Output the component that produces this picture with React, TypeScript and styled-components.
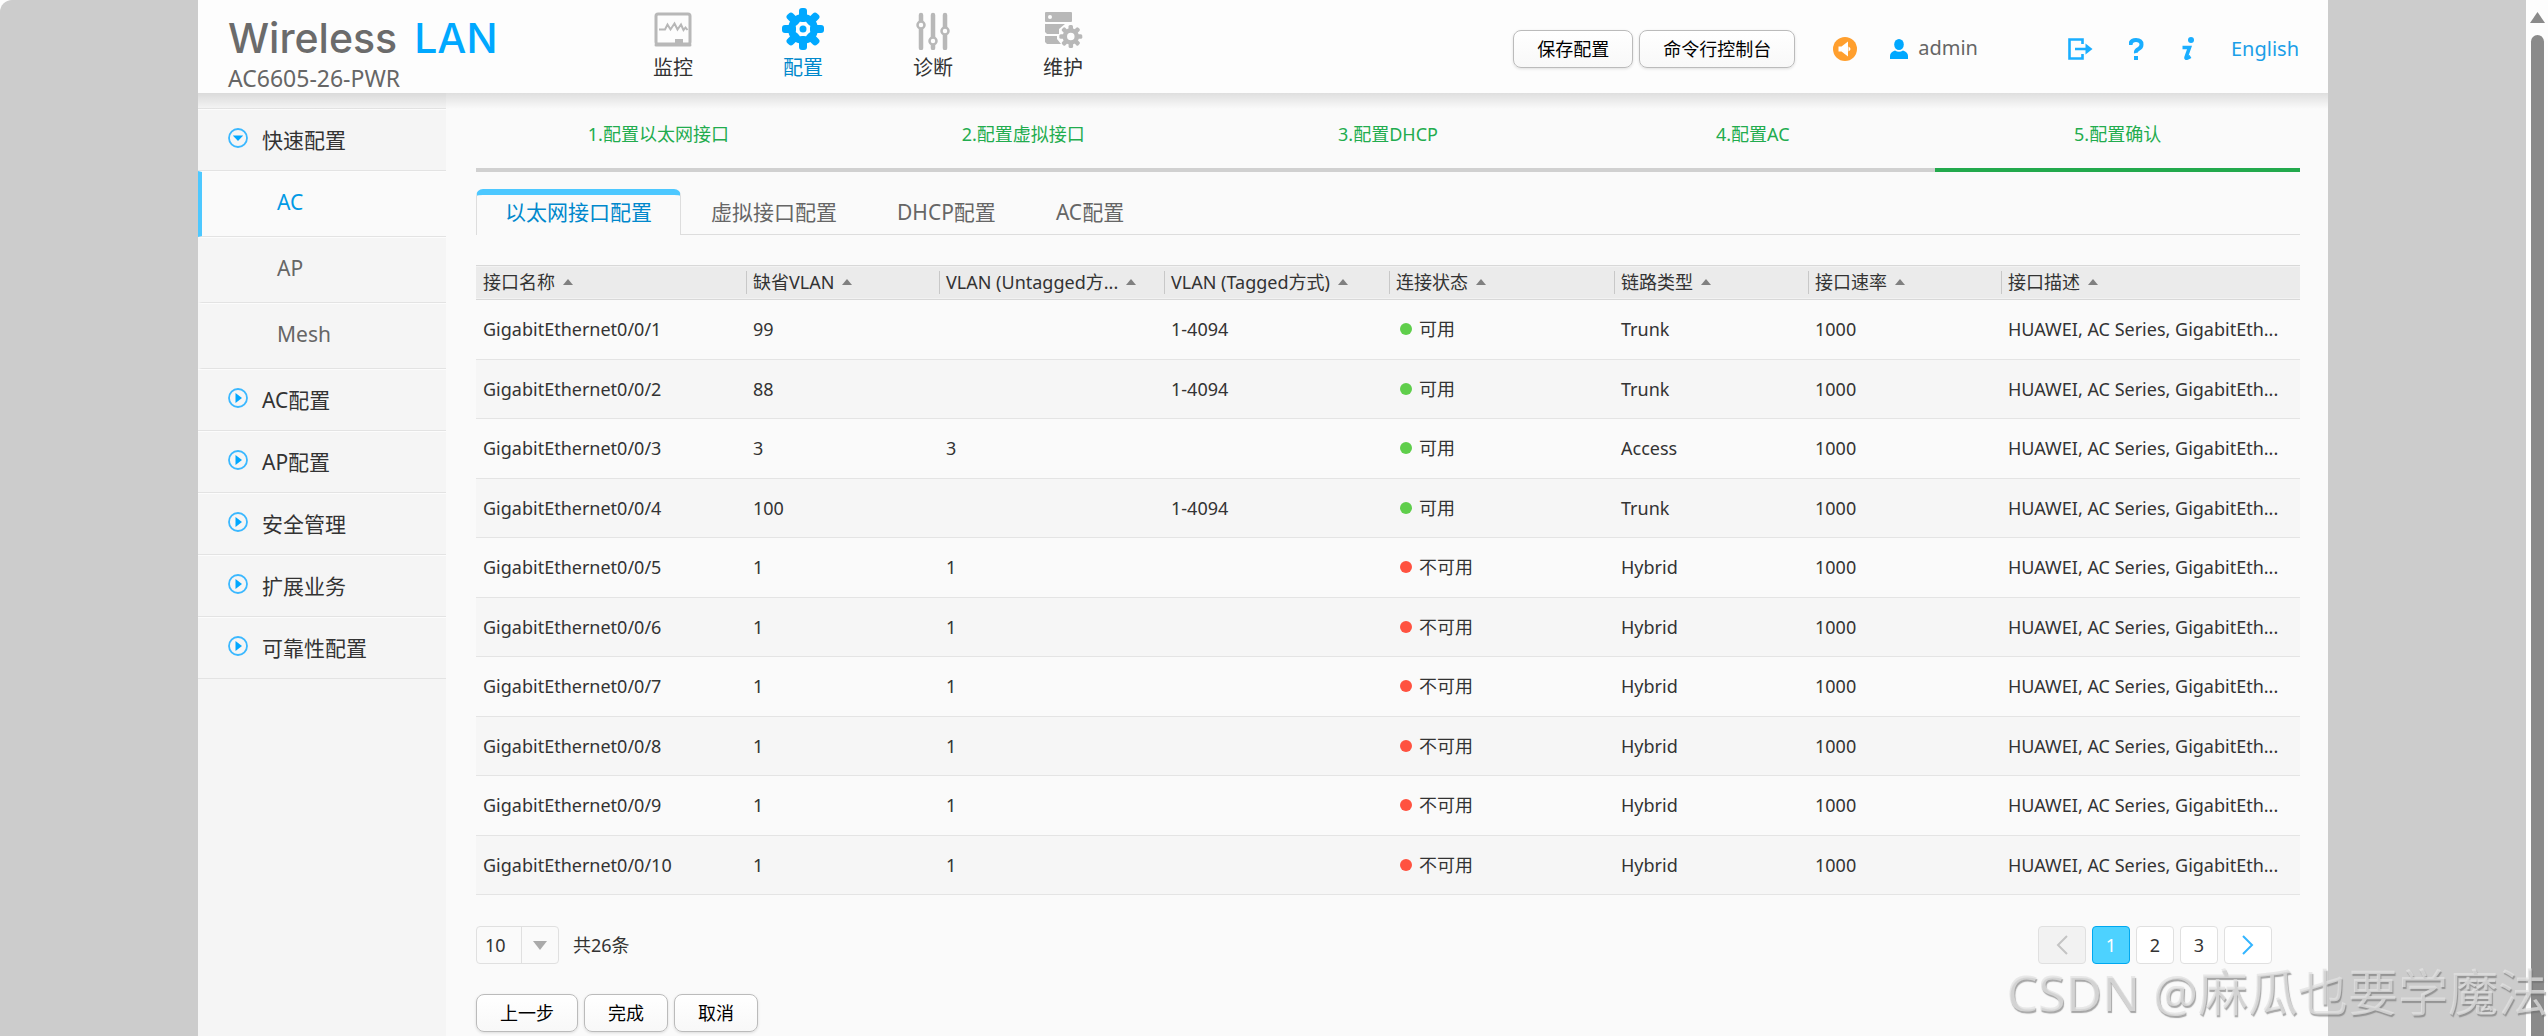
import React, { useState } from "react";
import styled, { createGlobalStyle, css } from "styled-components";

const Global = createGlobalStyle`
  *, *::before, *::after { box-sizing: border-box; }
  html { background: #fdfdfd; }
  body {
    margin: 0;
    color: #333;
    font-family: "Noto Sans", "Noto Sans CJK SC", sans-serif;
    font-size: 18px;
    line-height: 24px;
    overflow: hidden;
  }
  button, select { font-family: inherit; font-size: 18px; line-height: 24px; }
  a { color: inherit; text-decoration: none; }
`;

const Shell = styled.div`
  display: flex;
  height: 100vh;
  overflow: hidden;
  background: #fdfdfd;
`;

const Backdrop = styled.div`
  flex: 1;
  min-width: 0;
  background: #ccc;
  border-top-left-radius: 12px;
  overflow: hidden;
`;

const Page = styled.div`
  display: flex;
  flex-direction: column;
  max-width: 2130px;
  min-height: 100%;
  margin: 0 auto;
  background: #fafafa;
`;

const ScrollTrack = styled.div`
  display: flex;
  flex-direction: column;
  align-items: center;
  flex: 0 0 22px;
  padding-top: 12px;
  border-top-right-radius: 12px;
`;

const ScrollThumb = styled.div`
  flex: 1;
  width: 13px;
  margin-top: 12px;
  border-radius: 7px 7px 0 0;
  background: #8a8a8a;
`;

/* ---------- header ---------- */

const Header = styled.header`
  position: relative;
  display: flex;
  height: 93px;
  padding: 0 29px 0 30px;
  background: #fdfdfd;
  &::after {
    content: "";
    position: absolute;
    left: 0;
    right: 0;
    top: 100%;
    height: 16px;
    background: linear-gradient(rgba(0, 0, 0, 0.11), rgba(0, 0, 0, 0));
    pointer-events: none;
  }
`;

const Brand = styled.div`
  width: 380px;
  padding-top: 14px;
  color: #666;
`;

const Logo = styled.div`
  display: flex;
  gap: 17px;
  font: 500 41px/48px Inter, "Open Sans", sans-serif;
  color: #6b6b6b;
`;

const LogoAccent = styled.span`
  color: #00a8ff;
`;

const Model = styled.div`
  font-size: 23px;
  line-height: 32px;
`;

const Nav = styled.nav`
  display: flex;
`;

const NavLink = styled.a<{ $active?: boolean }>`
  display: flex;
  flex-direction: column;
  align-items: center;
  gap: 4px;
  width: 130px;
  padding-top: 8px;
  font-size: 20px;
  line-height: 28px;
  color: ${(p) => (p.$active ? "#0088cc" : "#333")};
  svg { display: block; }
`;

const Tools = styled.div`
  display: flex;
  align-items: center;
  margin-left: auto;
  height: 98px;
`;

const ButtonRow = styled.div`
  display: flex;
  gap: 6px;
`;

const Button = styled.button`
  height: 38px;
  padding: 0 23px;
  border: 1px solid #bbb;
  border-radius: 8px;
  background: linear-gradient(#fff, #f8f8f8);
  box-shadow: 0 1px 3px rgba(0, 0, 0, 0.12);
  color: #000;
  white-space: nowrap;
`;

const IconButton = styled.button`
  display: flex;
  padding: 0;
  border: 0;
  background: none;
`;

const User = styled.div`
  display: flex;
  align-items: center;
  gap: 10px;
  margin: 0 90px 0 33px;
  font-size: 20px;
  color: #666;
`;

const UserName = styled.span`
  padding-bottom: 3px;
`;

const Notice = styled(IconButton)`
  margin-left: 38px;
`;

const Shortcuts = styled.div`
  display: flex;
  align-items: center;
  gap: 36px;
`;

const Language = styled.a`
  font-size: 20px;
  color: #1b9fe8;
`;

/* ---------- sidebar ---------- */

const Body = styled.div`
  display: flex;
  flex: 1;
`;

const Sidebar = styled.nav`
  flex: 0 0 248px;
  padding-top: 15px;
  background: #f5f5f5;
`;

const Menu = styled.ul`
  margin: 0;
  padding: 0;
  list-style: none;
  border-top: 1px solid #e3e3e3;
`;

const itemBase = css`
  display: flex;
  align-items: center;
  font-size: 21px;
  border-top: 1px solid #fcfcfc;
  border-bottom: 1px solid #e3e3e3;
`;

const Group = styled.a`
  ${itemBase}
  gap: 14px;
  height: 62px;
  padding-left: 30px;
  svg { display: block; margin-bottom: 4px; }
`;

const SubItem = styled.a<{ $active?: boolean }>`
  ${itemBase}
  height: 66px;
  padding-bottom: 5px;
  padding-left: 75px;
  border-left: 4px solid ${(p) => (p.$active ? "#4dc8ff" : "transparent")};
  background: ${(p) => (p.$active ? "#fafafa" : "transparent")};
  color: ${(p) => (p.$active ? "#0099e5" : "#666")};
`;

/* ---------- content ---------- */

const Main = styled.main`
  flex: 1;
  min-width: 0;
  padding: 21px 28px 0 30px;
`;

const Steps = styled.ol`
  display: grid;
  grid-template-columns: repeat(5, 1fr);
  margin: 0;
  padding: 0;
  list-style: none;
`;

const Step = styled.li<{ $current?: boolean }>`
  height: 58px;
  padding-top: 8px;
  border-bottom: 4px solid ${(p) => (p.$current ? "#22a94c" : "#d0d0d0")};
  text-align: center;
  color: #22ac4e;
`;

const Tabs = styled.div`
  display: flex;
  height: 46px;
  margin-top: 17px;
  box-shadow: inset 0 -1px #ddd;
`;

const Tab = styled.button<{ $active?: boolean }>`
  padding: 0 29px;
  border: 1px solid transparent;
  border-width: 0 1px;
  background: none;
  font-size: 21px;
  color: #666;
  ${(p) =>
    p.$active &&
    css`
      padding: 0 28px 6px;
      border-color: #ddd;
      border-top: 6px solid #4dc8ff;
      border-radius: 7px 7px 0 0;
      background: #fafafa;
      color: #0088cc;
    `}
`;

const Table = styled.table`
  width: 100%;
  margin-top: 30px;
  table-layout: fixed;
  border-collapse: separate;
  border-spacing: 0;
`;

const Th = styled.th`
  height: 35px;
  padding: 0;
  border-top: 1px solid #d8d8d8;
  border-bottom: 1px solid #d8d8d8;
  background: #ebebeb;
  font-weight: 400;
  text-align: left;
  box-shadow: inset 0 1px #f2f2f2, inset 0 -1px #f2f2f2;
`;

const Sort = styled.button`
  display: flex;
  align-items: center;
  gap: 8px;
  width: 100%;
  height: 23px;
  padding: 0 6px 2px;
  border: 0;
  border-left: 1px solid #c8c8c8;
  background: none;
  color: #333;
  white-space: nowrap;
  th:first-child & { border-left-color: transparent; }
  svg { flex: none; }
`;

const Row = styled.tr`
  height: 60px;
  &:nth-child(even) { height: 59px; background: #f6f6f6; }
`;

const Td = styled.td`
  padding: 0 7px 1px;
  border-bottom: 1px solid #e4e4e4;
  overflow: hidden;
  text-overflow: ellipsis;
  white-space: nowrap;
`;

const Status = styled.span<{ $up: boolean }>`
  display: flex;
  align-items: center;
  gap: 7px;
  padding-left: 4px;
  &::before {
    content: "";
    width: 12px;
    height: 12px;
    border-radius: 50%;
    background: ${(p) => (p.$up ? "#5fce4b" : "#ff5240")};
  }
`;

const Footer = styled.div`
  display: flex;
  align-items: center;
  margin: 31px 28px 30px 0;
`;

const Total = styled.label`
  display: flex;
  align-items: center;
  gap: 14px;
`;

const SizeBox = styled.span`
  display: flex;
  position: relative;
  width: 83px;
  height: 38px;
  border: 1px solid #e0e0e0;
  border-radius: 4px;
  svg { position: absolute; right: 11px; top: 14px; pointer-events: none; }
  &::after {
    content: "";
    position: absolute;
    right: 36px;
    top: 0;
    bottom: 0;
    border-left: 1px solid #e0e0e0;
  }
`;

const SizeSelect = styled.select`
  appearance: none;
  width: 100%;
  padding: 0 8px;
  border: 0;
  background: none;
  color: #333;
`;

const Pager = styled.nav`
  display: flex;
  gap: 6px;
  margin-left: auto;
`;

const PageButton = styled.button<{ $active?: boolean; $wide?: boolean }>`
  display: flex;
  align-items: center;
  justify-content: center;
  width: ${(p) => (p.$wide ? 48 : 38)}px;
  height: 38px;
  padding: 0;
  border: 1px solid ${(p) => (p.$active ? "#00a8f0" : "#e0e0e0")};
  border-radius: 4px;
  background: ${(p) => (p.$active ? "#4dd2ff" : "#fff")};
  color: ${(p) => (p.$active ? "#fff" : "#333")};
  &:disabled { background: #f2f2f2; }
`;

const Watermark = styled.div`
  position: fixed;
  right: 0;
  bottom: 8px;
  font: 400 50px/72px "Noto Sans", "Noto Sans CJK SC", sans-serif;
  color: rgba(225, 225, 225, 0.75);
  text-shadow: 1px 2px 1px rgba(110, 110, 110, 0.6);
  white-space: nowrap;
  pointer-events: none;
`;

/* ---------- icons ---------- */

const teeth = [0, 45, 90, 135, 180, 225, 270, 315];

const MonitorIcon = () => (
  <svg width="40" height="42" viewBox="0 0 40 42" fill="none" stroke="#b8b8b8">
    <rect x="3" y="6" width="34" height="30" rx="2" strokeWidth="3" />
    <path d="M3 37h34" strokeWidth="3" strokeLinecap="round" />
    <path d="M6 21.500h6l2.500-5 3 5 4-6 3 6 3.500-5 2.500 5.500 2-2.500 2 2.500" strokeWidth="2" />
    <path d="M22 35v-4h8v4z" fill="#b8b8b8" stroke="none" />
  </svg>
);

const GearIcon = () => (
  <svg width="42" height="42" viewBox="0 0 42 42" fill="#00a8ff">
    {teeth.map((a) => (
      <rect key={a} x="17" y="0" width="8" height="14" rx="3" transform={`rotate(${a} 21 21)`} />
    ))}
    <circle cx="21" cy="21" r="11.500" fill="none" stroke="#00a8ff" strokeWidth="7" />
    <circle cx="21" cy="21" r="3.500" />
  </svg>
);

const SlidersIcon = () => (
  <svg width="40" height="42" viewBox="0 0 40 42" fill="#fdfdfd" stroke="#b8b8b8">
    <path d="M8 7v33M20 7v33M32 7v33" strokeWidth="4.500" strokeLinecap="round" />
    <circle cx="8" cy="17" r="3.500" strokeWidth="2.500" />
    <circle cx="20" cy="33" r="3.500" strokeWidth="2.500" />
    <circle cx="32" cy="23" r="3.500" strokeWidth="2.500" />
  </svg>
);

const MaintainIcon = () => (
  <svg width="40" height="42" viewBox="0 0 40 42" fill="#b8b8b8">
    <rect x="2" y="4" width="27" height="10" rx="1" />
    <circle cx="7" cy="9" r="2" fill="#fdfdfd" />
    <path d="M2 16h20l-6 5v5H4l-2-2zM2 28h12v3l4 5H4l-2-2z" />
    {teeth.map((a) => (
      <rect key={a} x="25.500" y="17" width="4.500" height="8" rx="1.500" transform={`rotate(${a} 27.800 28.500)`} />
    ))}
    <circle cx="27.800" cy="28.500" r="6" fill="#fdfdfd" stroke="#b8b8b8" strokeWidth="4.500" />
  </svg>
);

const SpeakerIcon = () => (
  <svg width="24" height="24" viewBox="0 0 24 24">
    <circle cx="12" cy="12" r="12" fill="#ff9f2e" />
    <path d="M5.500 9.500h3l6.500-5v15l-6.500-5h-3z" fill="#fff" />
    <path d="M15.500 9.500q4 2.500 0 5z" fill="#fff" />
  </svg>
);

const UserIcon = () => (
  <svg width="18" height="20" viewBox="0 0 18 20" fill="#00a8ff">
    <ellipse cx="9" cy="5.500" rx="4.800" ry="5.500" />
    <path d="M0 20v-3q0-4 5-5.500 4 2.500 8 0 5 1.500 5 5.500v3z" />
  </svg>
);

const LogoutIcon = () => (
  <svg width="25" height="22" viewBox="0 0 25 22" fill="none" stroke="#1aaeff" strokeWidth="2.600">
    <path d="M14.500 6V1.500h-13v19h13V16M7 11h14" />
    <path d="M17.500 5.500 24.500 11l-7 5.500z" fill="#1aaeff" stroke="none" />
  </svg>
);

const HelpIcon = () => (
  <svg width="16" height="22" viewBox="2 0 16 22" fill="none" stroke="#1aaeff" strokeWidth="4">
    <path d="M3.500 7q0-5 5.500-5t5.500 4.500q0 3-3 4.500t-2.500 4" />
    <path d="M9 18v4" />
  </svg>
);

const InfoIcon = () => (
  <svg width="14" height="24" viewBox="0 0 14 24" fill="none" stroke="#1aaeff">
    <circle cx="10" cy="3" r="3" fill="#1aaeff" stroke="none" />
    <path d="M1.500 10.500h7L5 20.500q-.5 2 4.500-1" strokeWidth="3.600" />
  </svg>
);

const BulletIcon = ({ open }: { open?: boolean }) => (
  <svg width="20" height="20" viewBox="0 0 20 20">
    <circle cx="10" cy="10" r="9" fill="none" stroke="#3bb8ff" strokeWidth="1.800" />
    <path d={open ? "M4.800 7.500h10.400L10 13z" : "M7.500 5v10l6.500-5z"} fill="#00a8ff" />
  </svg>
);

const Triangle = ({ w, h, color, down }: { w: number; h: number; color: string; down?: boolean }) => (
  <svg width={w} height={h} viewBox="0 0 10 6" preserveAspectRatio="none">
    <path d={down ? "M0 0h10L5 6z" : "M0 6h10L5 0z"} fill={color} />
  </svg>
);

const Chevron = ({ color, right }: { color: string; right?: boolean }) => (
  <svg width="12" height="20" viewBox="0 0 12 20" fill="none" stroke={color} strokeWidth="2">
    <path d={right ? "M1 1l9 9-9 9" : "M11 1l-9 9 9 9"} />
  </svg>
);

/* ---------- data ---------- */

const navItems = [
  { label: "监控", icon: <MonitorIcon /> },
  { label: "配置", icon: <GearIcon />, active: true },
  { label: "诊断", icon: <SlidersIcon /> },
  { label: "维护", icon: <MaintainIcon /> },
];

const groups = ["AC配置", "AP配置", "安全管理", "扩展业务", "可靠性配置"];
const steps = ["1.配置以太网接口", "2.配置虚拟接口", "3.配置DHCP", "4.配置AC", "5.配置确认"];
const tabs = ["以太网接口配置", "虚拟接口配置", "DHCP配置", "AC配置"];

const columns = [
  { title: "接口名称", width: 270 },
  { title: "缺省VLAN", width: 193 },
  { title: "VLAN (Untagged方...", width: 225 },
  { title: "VLAN (Tagged方式)", width: 225 },
  { title: "连接状态", width: 225 },
  { title: "链路类型", width: 194 },
  { title: "接口速率", width: 193 },
  { title: "接口描述", width: 299 },
];
const totalWidth = columns.reduce((sum, c) => sum + c.width, 0);

const shorten = (text: string, max: number) => (text.length > max ? text.slice(0, max) + "..." : text);

const ports = [
  ["99", "", "1-4094", "Trunk"],
  ["88", "", "1-4094", "Trunk"],
  ["3", "3", "", "Access"],
  ["100", "", "1-4094", "Trunk"],
  ...Array.from({ length: 6 }, () => ["1", "1", "", "Hybrid"]),
].map(([vlan, untagged, tagged, link], i) => ({
  name: `GigabitEthernet0/0/${i + 1}`,
  vlan,
  untagged,
  tagged,
  link,
  up: i < 4,
}));

export default function App() {
  const [tab, setTab] = useState(0);
  return (
    <>
      <Global />
      <Shell>
        <Backdrop>
          <Page>
            <Header>
              <Brand>
                <Logo>
                  Wireless <LogoAccent>LAN</LogoAccent>
                </Logo>
                <Model>AC6605-26-PWR</Model>
              </Brand>
              <Nav>
                {navItems.map((n) => (
                  <NavLink key={n.label} href="#" $active={n.active}>
                    {n.icon}
                    {n.label}
                  </NavLink>
                ))}
              </Nav>
              <Tools>
                <ButtonRow>
                  <Button type="button">保存配置</Button>
                  <Button type="button">命令行控制台</Button>
                </ButtonRow>
                <Notice type="button" aria-label="通知">
                  <SpeakerIcon />
                </Notice>
                <User>
                  <UserIcon />
                  <UserName>admin</UserName>
                </User>
                <Shortcuts>
                  <IconButton type="button" aria-label="退出">
                    <LogoutIcon />
                  </IconButton>
                  <IconButton type="button" aria-label="帮助">
                    <HelpIcon />
                  </IconButton>
                  <IconButton type="button" aria-label="关于">
                    <InfoIcon />
                  </IconButton>
                  <Language href="#">English</Language>
                </Shortcuts>
              </Tools>
            </Header>
            <Body>
              <Sidebar>
                <Menu>
                  <li>
                    <Group href="#">
                      <BulletIcon open />
                      快速配置
                    </Group>
                  </li>
                  {["AC", "AP", "Mesh"].map((label, i) => (
                    <li key={label}>
                      <SubItem href="#" $active={i === 0}>
                        {label}
                      </SubItem>
                    </li>
                  ))}
                  {groups.map((label) => (
                    <li key={label}>
                      <Group href="#">
                        <BulletIcon />
                        {label}
                      </Group>
                    </li>
                  ))}
                </Menu>
              </Sidebar>
              <Main>
                <Steps>
                  {steps.map((s, i) => (
                    <Step key={s} $current={i === 4}>
                      {s}
                    </Step>
                  ))}
                </Steps>
                <Tabs role="tablist">
                  {tabs.map((t, i) => (
                    <Tab
                      key={t}
                      type="button"
                      role="tab"
                      aria-selected={i === tab}
                      $active={i === tab}
                      onClick={() => setTab(i)}
                    >
                      {t}
                    </Tab>
                  ))}
                </Tabs>
                <Table>
                  <colgroup>
                    {columns.map((c) => (
                      <col key={c.title} style={{ width: `${(c.width / totalWidth) * 100}%` }} />
                    ))}
                  </colgroup>
                  <thead>
                    <tr>
                      {columns.map((c) => (
                        <Th key={c.title} scope="col">
                          <Sort type="button">
                            <span>{c.title}</span>
                            <Triangle w={10} h={6} color="#808080" />
                          </Sort>
                        </Th>
                      ))}
                    </tr>
                  </thead>
                  <tbody>
                    {ports.map((p) => (
                      <Row key={p.name}>
                        <Td>{p.name}</Td>
                        <Td>{p.vlan}</Td>
                        <Td>{p.untagged}</Td>
                        <Td>{p.tagged}</Td>
                        <Td>
                          <Status $up={p.up}>{p.up ? "可用" : "不可用"}</Status>
                        </Td>
                        <Td>{p.link}</Td>
                        <Td>1000</Td>
                        <Td>{shorten(`HUAWEI, AC Series, ${p.name}`, 29)}</Td>
                      </Row>
                    ))}
                  </tbody>
                </Table>
                <Footer>
                  <Total>
                    <SizeBox>
                      <SizeSelect defaultValue="10">
                        <option>10</option>
                        <option>20</option>
                        <option>50</option>
                      </SizeSelect>
                      <Triangle w={14} h={9} color="#aaa" down />
                    </SizeBox>
                    共26条
                  </Total>
                  <Pager aria-label="分页">
                    <PageButton type="button" $wide disabled aria-label="上一页">
                      <Chevron color="#c4c4c4" />
                    </PageButton>
                    <PageButton type="button" $active>1</PageButton>
                    <PageButton type="button">2</PageButton>
                    <PageButton type="button">3</PageButton>
                    <PageButton type="button" $wide aria-label="下一页">
                      <Chevron color="#33b5ff" right />
                    </PageButton>
                  </Pager>
                </Footer>
                <ButtonRow>
                  <Button type="button">上一步</Button>
                  <Button type="button">完成</Button>
                  <Button type="button">取消</Button>
                </ButtonRow>
              </Main>
            </Body>
          </Page>
        </Backdrop>
        <ScrollTrack aria-hidden="true">
          <Triangle w={15} h={11} color="#8a8a8a" />
          <ScrollThumb />
        </ScrollTrack>
      </Shell>
      <Watermark>CSDN @麻瓜也要学魔法</Watermark>
    </>
  );
}
